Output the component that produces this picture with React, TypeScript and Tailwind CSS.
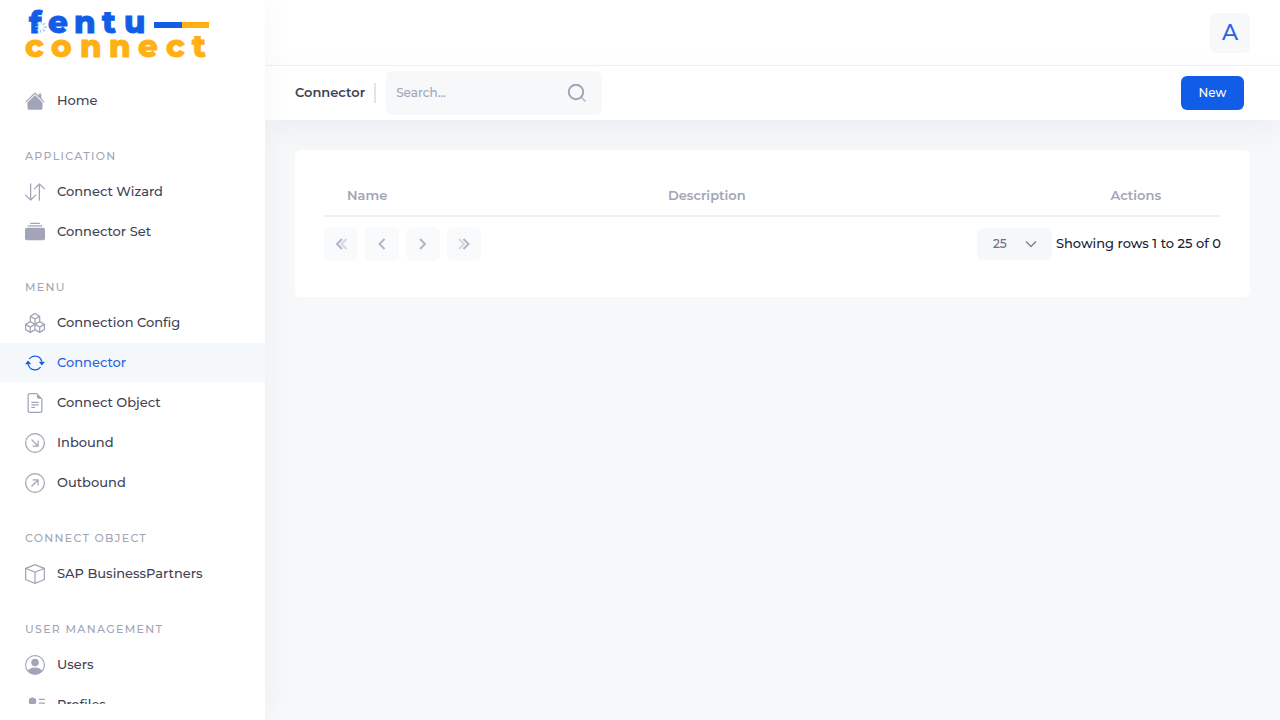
import type { ComponentType } from "react";
import {
  BsArrowDownRightCircle,
  BsArrowDownUp,
  BsArrowRepeat,
  BsArrowUpRightCircle,
  BsBox,
  BsBoxes,
  BsCollectionFill,
  BsFileEarmarkText,
  BsHouseFill,
  BsPersonCircle,
  BsPersonLinesFill,
} from "react-icons/bs";
import clsx from "clsx";

// ─── Types ───────────────────────────────────────────────

interface MenuItem {
  label: string;
  icon: ComponentType<{ className?: string }>;
  active?: boolean;
}

interface MenuSection {
  title?: string;
  items: MenuItem[];
}

// ─── Menu ────────────────────────────────────────────────

const MENU: MenuSection[] = [
  { items: [{ label: "Home", icon: BsHouseFill }] },
  {
    title: "Application",
    items: [
      { label: "Connect Wizard", icon: BsArrowDownUp },
      { label: "Connector Set", icon: BsCollectionFill },
    ],
  },
  {
    title: "Menu",
    items: [
      { label: "Connection Config", icon: BsBoxes },
      { label: "Connector", icon: BsArrowRepeat, active: true },
      { label: "Connect Object", icon: BsFileEarmarkText },
      { label: "Inbound", icon: BsArrowDownRightCircle },
      { label: "Outbound", icon: BsArrowUpRightCircle },
    ],
  },
  { title: "Connect Object", items: [{ label: "SAP BusinessPartners", icon: BsBox }] },
  {
    title: "User Management",
    items: [
      { label: "Users", icon: BsPersonCircle },
      { label: "Profiles", icon: BsPersonLinesFill },
    ],
  },
];

// ─── Logo ────────────────────────────────────────────────

function Logo() {
  return (
    <svg
      className="overflow-visible"
      width="190"
      height="60"
      viewBox="0 0 190 60"
      role="img"
      aria-label="fentu connect"
    >
      <g fontFamily="Montserrat, Inter, sans-serif" fontWeight="800" fontSize="31" strokeWidth="0.8">
        <text x="9 28 54 82 104" y="29" fill="#125de8" stroke="#125de8">
          fentu
        </text>
        <text x="5 31 60 89 118 146 172" y="53" fill="#ffb014" stroke="#ffb014">
          connect
        </text>
      </g>
      <rect x="134" y="18" width="28" height="6" fill="#125de8" />
      <rect x="162" y="18" width="27" height="6" fill="#ffb014" />
      <circle cx="21" cy="23" r="4" fill="none" stroke="#8fc4f5" strokeWidth="3" strokeDasharray="1 2" />
    </svg>
  );
}

// ─── Sidebar ─────────────────────────────────────────────

function Sidebar() {
  return (
    <aside className="z-10 flex w-[265px] shrink-0 flex-col bg-white pb-4 shadow-[0_0_28px_0_rgba(60,80,100,0.05)]">
      <a href="#" className="block h-[81px] shrink-0 pt-1 pl-5">
        <Logo />
      </a>
      <nav className="min-h-0 flex-1 overflow-y-auto [scrollbar-width:none]">
        {MENU.map((section) => (
          <section key={section.title ?? "top"}>
            {section.title && (
              <h2 className="px-[25px] pt-7 pb-2 text-[11px] leading-4 font-medium tracking-[0.12em] text-[#a1a5b7] uppercase">
                {section.title}
              </h2>
            )}
            <ul className="flex flex-col gap-px">
              {section.items.map(({ label, icon: Icon, active }) => (
                <li key={label}>
                  <a
                    href="#"
                    aria-current={active ? "page" : undefined}
                    className={clsx(
                      "flex h-[39px] items-center gap-3 px-[25px] text-[13px] font-medium",
                      active ? "bg-[#f5f8fa] text-[#2962e4]" : "text-[#3f4254]",
                    )}
                  >
                    <Icon className={clsx("size-5 shrink-0", active ? "text-[#125de8]" : "text-[#a1a5b7]")} />
                    {label}
                  </a>
                </li>
              ))}
            </ul>
          </section>
        ))}
      </nav>
    </aside>
  );
}

// ─── Toolbar ─────────────────────────────────────────────

function Toolbar() {
  return (
    <div className="flex h-[54px] items-center justify-between bg-white pr-9 pl-[30px] shadow-[0_10px_30px_0_rgba(60,80,100,0.06)]">
      <div className="flex items-center">
        <h1 className="text-[13px] font-semibold text-[#3f4254]">Connector</h1>
        <span className="mr-2.5 ml-[9px] h-5 w-0.5 bg-[#e1e3f0]" />
        <label className="flex h-11 w-[216px] items-center rounded-md bg-[#f6f8fa] pr-[15px] pl-2.5">
          <input
            type="search"
            aria-label="Search"
            placeholder="Search..."
            className="min-w-0 flex-1 text-xs font-medium text-[#3f4254] outline-none placeholder:text-[#a1a5b7]"
          />
          <svg className="size-5 shrink-0" viewBox="0 0 20 20" fill="none" stroke="#a1a3b8" strokeWidth="2">
            <circle cx="9" cy="9" r="7.2" />
            <path d="m14.5 14.5 4 4" opacity="0.6" />
          </svg>
        </label>
      </div>
      <button type="button" className="h-[34px] w-[63px] rounded-md bg-[#125de8] text-xs font-medium text-white">
        New
      </button>
    </div>
  );
}

// ─── Pagination ──────────────────────────────────────────

const PAGE_BUTTONS = [
  { label: "First page", strong: "M11 5l-5 5 5 5", faint: "M15.5 5l-5 5 5 5" },
  { label: "Previous page", strong: "M12.5 5l-5 5 5 5" },
  { label: "Next page", strong: "M7 5l5 5-5 5" },
  { label: "Last page", strong: "M9.5 5l5 5-5 5", faint: "M5 5l5 5-5 5" },
];

function Pagination() {
  return (
    <div className="flex items-center justify-between pt-2.5">
      <div className="flex gap-[7px]">
        {PAGE_BUTTONS.map(({ label, strong, faint }) => (
          <button
            key={label}
            type="button"
            aria-label={label}
            disabled
            className="flex size-[34px] items-center justify-center rounded-md bg-[#f9fafb]"
          >
            <svg className="size-5" viewBox="0 0 20 20" fill="none" stroke="#b3b5c6" strokeWidth="2">
              <path d={strong} />
              {faint && <path d={faint} opacity="0.5" />}
            </svg>
          </button>
        ))}
      </div>
      <div className="flex items-center gap-1">
        <div className="grid items-center">
          <select
            aria-label="Rows per page"
            defaultValue="25"
            className="col-start-1 row-start-1 h-8 w-[75px] appearance-none rounded-md bg-[#f5f8fa] pl-4 text-xs font-medium text-[#6d7086]"
          >
            <option>25</option>
            <option>50</option>
            <option>100</option>
          </select>
          <svg
            className="pointer-events-none col-start-1 row-start-1 mr-[15px] size-3 justify-self-end"
            viewBox="0 0 12 12"
            fill="none"
            stroke="#7e8299"
            strokeWidth="1.5"
          >
            <path d="m1 3.5 5 5 5-5" />
          </svg>
        </div>
        <span className="text-[13px] font-medium text-[#181c32]">Showing rows 1 to 25 of 0</span>
      </div>
    </div>
  );
}

// ─── Page ────────────────────────────────────────────────

export default function App() {
  return (
    <div className="flex h-screen bg-[#f6f8fa] font-[Montserrat,Inter,sans-serif]">
      <Sidebar />
      <div className="flex min-w-0 flex-1 flex-col">
        <header className="flex h-[66px] shrink-0 items-center justify-end border-b border-[#eff2f5] bg-white pr-[30px]">
          <button
            type="button"
            aria-label="Account"
            className="size-10 rounded-md bg-[#f6f8fa] text-[22px] font-medium text-[#2962e4]"
          >
            A
          </button>
        </header>
        <Toolbar />
        <main className="flex-1 overflow-auto p-[30px]">
          <div className="rounded-md bg-white px-[29px] pt-6 pb-9">
            <table className="w-full table-fixed text-[13px] leading-5 text-[#a1a5b7]">
              <thead>
                <tr className="h-[42px] border-b-2 border-[#eff2f5]">
                  <th className="w-[36%] pl-[23px] text-left font-semibold">Name</th>
                  <th className="pl-[21px] text-left font-semibold">Description</th>
                  <th className="w-[19%] text-center font-semibold">Actions</th>
                </tr>
              </thead>
              <tbody />
            </table>
            <Pagination />
          </div>
        </main>
      </div>
    </div>
  );
}
